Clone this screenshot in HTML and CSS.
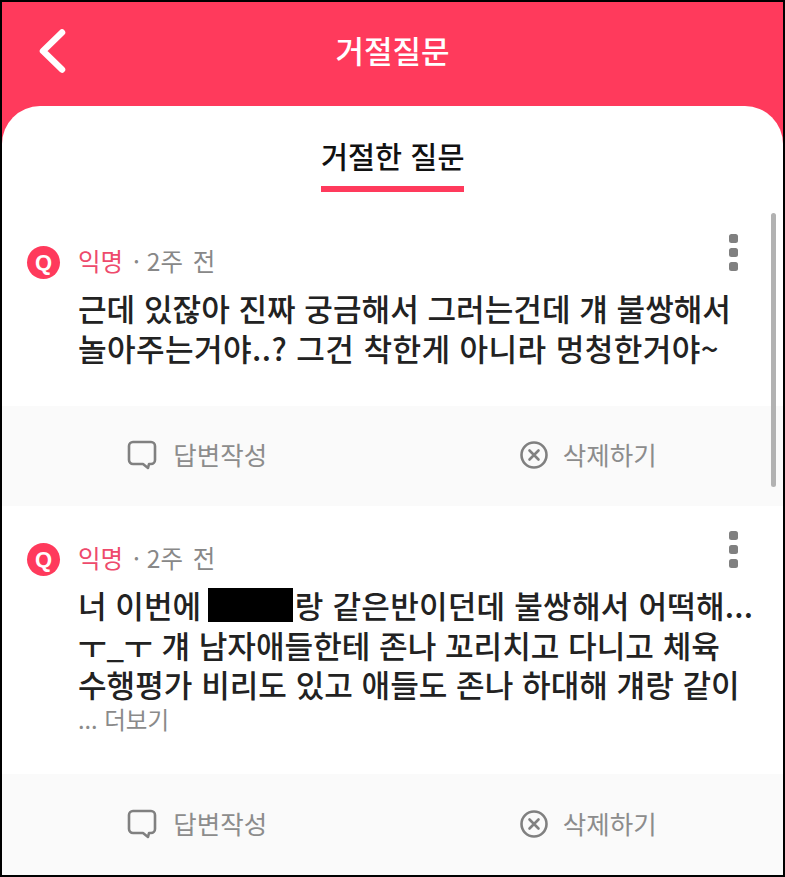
FILE: index.html
```html
<!DOCTYPE html>
<html lang="ko">
<head>
<meta charset="utf-8">
<title>거절질문</title>
<link rel="stylesheet" href="styles.css">
</head>
<body>
<div class="screen">
  <header class="topbar">
    <svg class="back" viewBox="0 0 28 44" aria-hidden="true"><path d="M24 3.5 5 22l19 18.5"/></svg>
    <h1 class="title">거절질문</h1>
  </header>
  <main class="sheet">
    <div class="tabs"><span class="tab">거절한 질문</span></div>
    <div class="scrollbar"></div>
    <article class="post post-first">
      <div class="meta">
        <span class="badge">Q</span>
        <span class="author">익명</span>
        <span class="time">· <span class="ago">2주 전</span></span>
        <span class="kebab"><i></i><i></i><i></i></span>
      </div>
      <p class="body">근데 있잖아 진짜 궁금해서 그러는건데 걔 불쌍해서<br><span class="loose">놀아주는거야..? 그건 착한게 아니라 멍청한거야~</span></p>
    </article>
    <div class="actions">
      <span class="action">
        <svg class="icon" viewBox="0 0 30 30" aria-hidden="true"><path d="M6 2h18a4 4 0 0 1 4 4v14a4 4 0 0 1-4 4h-2l-1 4-5-4H6a4 4 0 0 1-4-4V6a4 4 0 0 1 4-4z"/></svg>
        <span class="label">답변작성</span>
      </span>
      <span class="action">
        <svg class="icon" viewBox="0 0 30 30" aria-hidden="true"><circle cx="15" cy="15" r="12.5"/><path d="m10.500 10.500 9 9m0-9-9 9"/></svg>
        <span class="label">삭제하기</span>
      </span>
    </div>
    <article class="post">
      <div class="meta">
        <span class="badge">Q</span>
        <span class="author">익명</span>
        <span class="time">· <span class="ago">2주 전</span></span>
        <span class="kebab"><i></i><i></i><i></i></span>
      </div>
      <p class="body">너 이번에 <span class="redact"></span><span class="slight">랑 같은반이던데 불쌍해서 어떡해...</span><br>ㅜ_ㅜ 걔 남자애들한테 존나 꼬리치고 다니고 체육<br>수행평가 비리도 있고 애들도 존나 하대해 걔랑 같이</p>
      <p class="more">... 더보기</p>
    </article>
    <div class="actions">
      <span class="action">
        <svg class="icon" viewBox="0 0 30 30" aria-hidden="true"><path d="M6 2h18a4 4 0 0 1 4 4v14a4 4 0 0 1-4 4h-2l-1 4-5-4H6a4 4 0 0 1-4-4V6a4 4 0 0 1 4-4z"/></svg>
        <span class="label">답변작성</span>
      </span>
      <span class="action">
        <svg class="icon" viewBox="0 0 30 30" aria-hidden="true"><circle cx="15" cy="15" r="12.5"/><path d="m10.500 10.500 9 9m0-9-9 9"/></svg>
        <span class="label">삭제하기</span>
      </span>
    </div>
  </main>
</div>
</body>
</html>
```

FILE: styles.css
```css
* { box-sizing: border-box; }
html, body { margin: 0; height: 100%; background: #000; }
body { padding: 2px; overflow: hidden; }
.screen {
  position: relative;
  height: 873px;
  background: #ff3a5c;
  overflow: hidden;
  font-family: "Noto Sans CJK KR", "Noto Sans", sans-serif;
  color: #1a1a1a;
}
.topbar {
  height: 104px;
  display: flex;
  align-items: flex-start;
  justify-content: center;
  position: relative;
}
.back {
  position: absolute;
  left: 36px;
  top: 27px;
  width: 28px;
  height: 44px;
  fill: none;
  stroke: #fff;
  stroke-width: 6.500;
  stroke-linecap: round;
  stroke-linejoin: round;
}
.title {
  margin: 25px 0 0;
  font-size: 31px;
  line-height: 46px;
  font-weight: 500;
  color: #fff;
}
.sheet {
  position: relative;
  height: 769px;
  background: #fff;
  border-radius: 38px 38px 0 0;
  overflow: hidden;
}
.tabs {
  height: 103px;
  display: flex;
  justify-content: center;
  align-items: flex-start;
}
.tab {
  display: block;
  width: 143px;
  height: 86px;
  padding-top: 26px;
  border-bottom: 6px solid #ff3a5c;
  font-size: 29.400px;
  line-height: 46px;
  font-weight: 500;
  white-space: nowrap;
  text-align: center;
  color: #111;
}
.scrollbar {
  position: absolute;
  right: 7px;
  top: 107px;
  width: 5px;
  height: 274px;
  border-radius: 3px;
  background: #b2b2b2;
}
.post { padding: 37px 0 37px 25px; background: #fff; }
.post-first { padding-top: 37px; padding-bottom: 38px; }
.meta {
  position: relative;
  display: flex;
  align-items: center;
  height: 33px;
  font-size: 24.500px;
  line-height: 29px;
  gap: 10px;
}
.badge {
  width: 33px;
  height: 33px;
  margin-right: 8px;
  border-radius: 50%;
  background: #ff3a5c;
  color: #fff;
  font-family: "Liberation Sans", sans-serif;
  font-size: 22px;
  font-weight: 700;
  line-height: 33px;
  text-align: center;
  flex: none;
}
.author, .time { margin-top: -4px; }
.author { color: #ee4a6c; }
.time { color: #888; }
.ago { word-spacing: 3px; }
.kebab {
  position: absolute;
  left: 702px;
  top: -12px;
  display: flex;
  flex-direction: column;
  gap: 5px;
}
.kebab i {
  display: block;
  width: 9px;
  height: 9px;
  border-radius: 2.500px;
  background: #808080;
}
.body {
  margin: 9px 0 1px 51px;
  font-size: 31.100px;
  line-height: 39.500px;
  font-weight: 500;
  white-space: nowrap;
  color: #222;
}
.loose { letter-spacing: 0.4px; }
.slight { letter-spacing: 0.2px; }
.redact {
  display: inline-block;
  width: 85px;
  height: 34px;
  margin: 0 2px 0 -2px;
  background: #000;
  vertical-align: -4px;
}
.more {
  margin: 1px 0 4px 51px;
  font-size: 23.500px;
  line-height: 28px;
  color: #8a8a8a;
}
.actions {
  display: grid;
  grid-template-columns: 1fr 1fr;
  height: 100px;
  background: #fafafa;
}
.actions:last-child { height: 102px; }
.action {
  display: flex;
  align-items: center;
  justify-content: center;
  gap: 16px;
  font-size: 25.500px;
  color: #8c8c8c;
}
.action + .action { gap: 14px; }
.label { margin-top: -5px; }
.icon {
  width: 30px;
  height: 30px;
  margin-top: -2px;
  fill: none;
  stroke: #808080;
  stroke-width: 2.600;
  stroke-linejoin: round;
  stroke-linecap: round;
}
```
